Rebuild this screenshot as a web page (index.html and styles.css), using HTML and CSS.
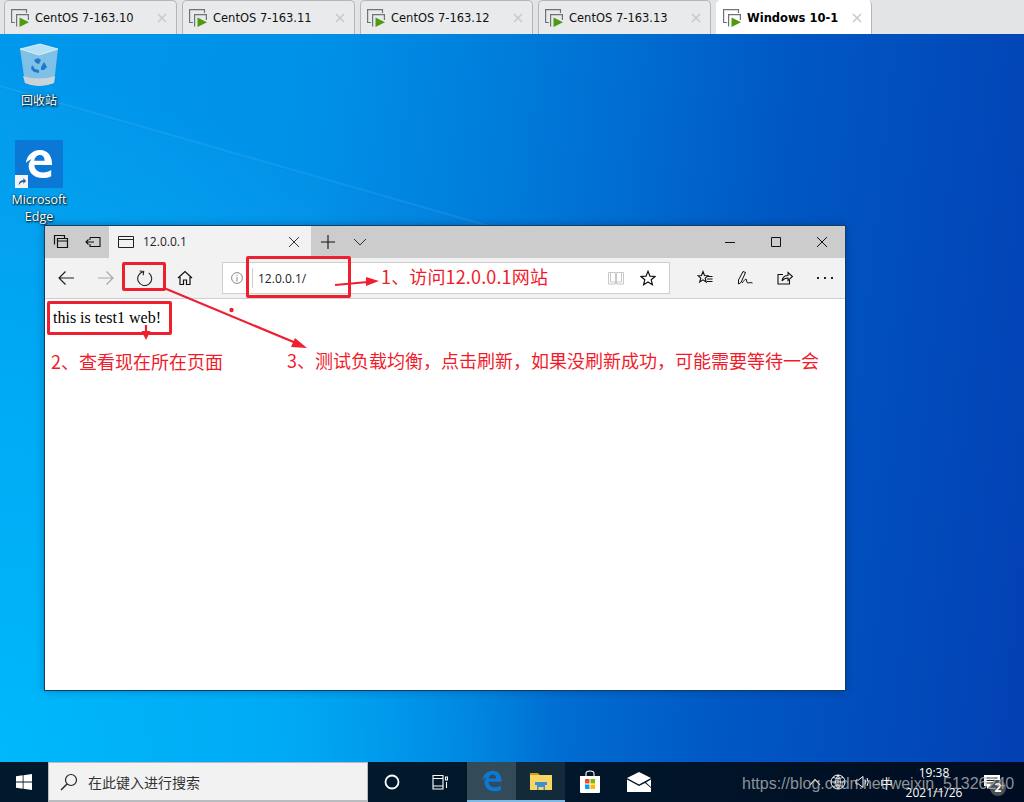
FILE: index.html
```html
<!DOCTYPE html>
<html lang="zh">
<head>
<meta charset="utf-8">
<title>Windows 10-1</title>
<link rel="stylesheet" href="styles.css">
</head>
<body>
<svg class="defs" width="0" height="0" aria-hidden="true">
  <symbol id="vm" viewBox="0 0 18 18">
    <path d="M15.500 4V.6H.6V13.500H4" fill="none" stroke="#6d7378" stroke-width="1.200"/>
    <path d="M5.600 17.500V5.600H17.400V11" fill="none" stroke="#6d7378" stroke-width="1.200"/>
    <path d="M8.500 8.500V18L18 13.200Z" fill="#4f9a10"/>
  </symbol>
  <symbol id="x" viewBox="0 0 10 10">
    <path d="M1 1L9 9M9 1L1 9" fill="none" stroke="currentColor" stroke-width="1.500"/>
  </symbol>
</svg>

<header class="tabstrip">
  <div class="tab"><svg class="tab-icon"><use href="#vm"/></svg><span class="tab-label">CentOS 7-163.10</span><svg class="tab-x"><use href="#x"/></svg></div>
  <div class="tab"><svg class="tab-icon"><use href="#vm"/></svg><span class="tab-label">CentOS 7-163.11</span><svg class="tab-x"><use href="#x"/></svg></div>
  <div class="tab"><svg class="tab-icon"><use href="#vm"/></svg><span class="tab-label">CentOS 7-163.12</span><svg class="tab-x"><use href="#x"/></svg></div>
  <div class="tab"><svg class="tab-icon"><use href="#vm"/></svg><span class="tab-label">CentOS 7-163.13</span><svg class="tab-x"><use href="#x"/></svg></div>
  <div class="tab tab-active"><svg class="tab-icon"><use href="#vm"/></svg><span class="tab-label">Windows 10-1</span><svg class="tab-x"><use href="#x"/></svg></div>
</header>

<main class="desktop">
  <svg class="ray" viewBox="0 0 1024 728" aria-hidden="true">
    <path d="M0 52L520 201" fill="none" stroke="#ffffff" stroke-opacity=".07" stroke-width="2"/>
    <path d="M0 54L520 203L0 240Z" fill="#ffffff" opacity=".012"/>
  </svg>

  <div class="desk-icon desk-bin">
    <svg class="bin-art" viewBox="0 0 40 44">
      <path d="M1 6L21 1L39 6L35 40Q20 46 6 40Z" fill="#8dc4e6" opacity=".9"/>
      <path d="M1 6L21 1L39 6L20 12Z" fill="#b7dff5" stroke="#e3f3fb" stroke-width=".8"/>
      <path d="M4 33Q20 38 36 33L35 40Q20 46 6 40Z" fill="#c9d3d9"/>
      <path d="M15 17L19 15L22 17L20 21L17 20ZM25 19L28 24L25 27L22 27V24ZM13 22L16 26L20 27V30L15 29L12 26Z" fill="#1e79c8"/>
    </svg>
    <span class="desk-label">回收站</span>
  </div>

  <div class="desk-icon desk-edge">
    <div class="edge-tile">
      <svg class="edge-art" viewBox="0 0 32 32">
        <path d="M2 15C3 6 10 1 17 1C26 1 30 8 30 17H11C11.500 22 15 25 20 25C24 25 27 24 29 22.500V29C26 30.500 23 31 20 31C11 31 5.500 26 5 19C4.800 16 6 13.500 8 11C5 12 3.500 13.500 2 15ZM11 12.500H22C22 8.500 20 6.500 17 6.500C14 6.500 11.500 9 11 12.500Z" fill="#fff"/>
      </svg>
      <span class="shortcut"><svg viewBox="0 0 12 12"><path d="M3 10C3 6 5 4.500 8 4.500V2.500L11 5.500L8 8.500V6.500C6 6.500 4.500 7.500 3 10Z" fill="#1f5f9e"/></svg></span>
    </div>
    <span class="desk-label">Microsoft<br>Edge</span>
  </div>

  <section class="window">
    <div class="win-title">
      <div class="title-tools">
        <svg class="ico16" viewBox="0 0 16 16"><path d="M1.500 10.500V1.500H11.500V4M4.500 13.500V4.500H14.500V13.500ZM4.500 7H14.500" fill="none" stroke="#111" stroke-width="1.200"/></svg>
        <svg class="ico16" viewBox="0 0 16 16"><path d="M5 3.500H15V12.500H5V10M5 6V3.500M9 8H1M3.500 5.500L1 8L3.500 10.500" fill="none" stroke="#111" stroke-width="1.100"/></svg>
      </div>
      <div class="page-tab">
        <svg class="ico16" viewBox="0 0 16 16"><path d="M.5 2.500H15.500V13.500H.5ZM.5 5.500H15.500" fill="none" stroke="#222" stroke-width="1"/></svg>
        <span class="page-title">12.0.0.1</span>
        <svg class="page-x" viewBox="0 0 12 12"><path d="M1 1L11 11M11 1L1 11" fill="none" stroke="#333" stroke-width="1"/></svg>
      </div>
      <div class="title-new">
        <svg class="ico14" viewBox="0 0 14 14"><path d="M7 0V14M0 7H14" fill="none" stroke="#111" stroke-width="1.100"/></svg>
        <svg class="ico14" viewBox="0 0 14 14"><path d="M1 4L7 10L13 4" fill="none" stroke="#333" stroke-width="1"/></svg>
      </div>
      <div class="caption">
        <span class="cap-btn"><svg class="ico10" viewBox="0 0 10 10"><path d="M0 5.500H10" stroke="#111" fill="none"/></svg></span>
        <span class="cap-btn"><svg class="ico10" viewBox="0 0 10 10"><path d="M.5.500H9.500V9.500H.5Z" stroke="#111" fill="none"/></svg></span>
        <span class="cap-btn"><svg class="ico10" viewBox="0 0 10 10"><path d="M0 0L10 10M10 0L0 10" stroke="#111" fill="none"/></svg></span>
      </div>
    </div>
    <div class="toolbar">
      <div class="nav">
        <svg class="ico18" viewBox="0 0 18 18"><path d="M17 9H2M8.500 2.500L2 9L8.500 15.500" fill="none" stroke="#222" stroke-width="1.200"/></svg>
        <svg class="ico18" viewBox="0 0 18 18"><path d="M1 9H16M9.500 2.500L16 9L9.500 15.500" fill="none" stroke="#a8a8a8" stroke-width="1.200"/></svg>
        <svg class="ico16" viewBox="0 0 16 16"><path d="M5.500 2A7 7 0 1 0 11 2.400M5.800 5.500V1.800H1.800" fill="none" stroke="#222" stroke-width="1.100" transform="rotate(8 8 8)"/></svg>
        <svg class="ico16 home" viewBox="0 0 16 16"><path d="M1 8L8 1.500L15 8M3 7V14.500H6.500V10H9.500V14.500H13V7" fill="none" stroke="#111" stroke-width="1.200"/></svg>
      </div>
      <div class="address">
        <svg class="info" viewBox="0 0 12 12"><circle cx="6" cy="6" r="5.400" fill="none" stroke="#888"/><path d="M6 5V9.500M6 2.800V4" stroke="#888" fill="none"/></svg>
        <span class="addr-sep"></span>
        <span class="addr-text">12.0.0.1/</span>
        <svg class="book" viewBox="0 0 16 14"><path d="M.5 1.500H7.500V13H.5ZM8.500 1.500H15.500V13H8.500ZM2.500 1.500V11H7.500M13.500 1.500V11H8.500" fill="none" stroke="#c8c8c8"/></svg>
        <svg class="star" viewBox="0 0 16 16"><path d="M8 1.300L10 6.200L15 6.500L11.200 9.800L12.400 14.700L8 12L3.600 14.700L4.800 9.800L1 6.500L6 6.200Z" fill="none" stroke="#111" stroke-width="1.200"/></svg>
      </div>
      <div class="actions">
        <svg class="ico16" viewBox="0 0 16 16"><path d="M6 1.500L7.500 5.500L11 5.700L8.200 8.200L9.200 12L6 9.800L2.700 12L3.800 8.200L1 5.700L4.500 5.500ZM10 6.500H15.500M10 9H15.500M10 11.500H15.500" fill="none" stroke="#111" stroke-width="1.100"/></svg>
        <svg class="ico16" viewBox="0 0 16 16"><path d="M1.500 10L6 1.500L8.500 2.500L4 12.500L1.500 14ZM5 13C7 11 8 9 9 9C10 9 9 13 11 13C12.500 13 13 12 15.500 13" fill="none" stroke="#111" stroke-width="1"/></svg>
        <svg class="ico16" viewBox="0 0 16 16"><path d="M6 4.500H1V14H12.500V10M5 11C5.500 7.500 8 5.500 11 5.500V2.500L15.500 6.500L11 10.500V8C8.500 8 6.500 9 5 11Z" fill="none" stroke="#111" stroke-width="1.100"/></svg>
        <svg class="dots" viewBox="0 0 16 2"><path d="M0 0H2V2H0ZM7 0H9V2H7ZM14 0H16V2H14Z" fill="#222"/></svg>
      </div>
    </div>
    <div class="page">this is test1 web!</div>
  </section>

  <div class="mark mark-reload"></div>
  <div class="mark mark-address"></div>
  <div class="mark mark-text"></div>
  <svg class="arrows" viewBox="0 0 1024 728" aria-hidden="true">
    <path d="M335 251L368 248" stroke="#ee2030" stroke-width="2.200" fill="none"/>
    <path d="M379 247L366 243V252Z" fill="#ee2030"/>
    <path d="M146 291V300" stroke="#ee2030" stroke-width="2.200" fill="none"/>
    <path d="M146 306L141.500 297H150.500Z" fill="#ee2030"/>
    <path d="M164 254L296 309" stroke="#ee2030" stroke-width="2.200" fill="none"/>
    <path d="M307 314L295 304L291 313Z" fill="#ee2030"/>
    <circle cx="231.500" cy="276" r="2.200" fill="#ee2030"/>
  </svg>
  <span class="note note-1">1、访问12.0.0.1网站</span>
  <span class="note note-2">2、查看现在所在页面</span>
  <span class="note note-3">3、测试负载均衡，点击刷新，如果没刷新成功，可能需要等待一会</span>
</main>

<footer class="taskbar">
  <div class="start">
    <svg class="win-logo" viewBox="0 0 16 16"><path d="M0 2.300L6.700 1.300V7.600H0ZM7.500 1.200L16 0V7.600H7.500ZM0 8.400H6.700V14.700L0 13.700ZM7.500 8.400H16V16L7.500 14.800Z" fill="#fff"/></svg>
  </div>
  <div class="search">
    <svg class="search-ico" viewBox="0 0 18 18"><circle cx="11" cy="7" r="5.500" fill="none" stroke="#222" stroke-width="1.200"/><path d="M7 11L1 17" stroke="#222" stroke-width="1.400"/></svg>
    <span class="search-text">在此键入进行搜索</span>
  </div>
  <div class="task-slot"><svg class="ico16" viewBox="0 0 16 16"><circle cx="8" cy="8" r="6.500" fill="none" stroke="#fff" stroke-width="1.800"/></svg></div>
  <div class="task-slot"><svg class="ico16" viewBox="0 0 16 16"><path d="M1 4.500V1.500H11V4.500M1 12V15H11V12M1 4.500H11V12H1ZM13.500 3V6H15.500V3ZM14.500 8V14" fill="none" stroke="#fff" stroke-width="1.100"/></svg></div>
  <div class="task-slot task-app task-on"><svg class="ico22" viewBox="0 0 32 32"><path d="M2 15C3 6 10 1 17 1C26 1 30 8 30 17H11C11.500 22 15 25 20 25C24 25 27 24 29 22.500V29C26 30.500 23 31 20 31C11 31 5.500 26 5 19C4.800 16 6 13.500 8 11C5 12 3.500 13.500 2 15ZM11 12.500H22C22 8.500 20 6.500 17 6.500C14 6.500 11.500 9 11 12.500Z" fill="#0a78d4"/></svg></div>
  <div class="task-slot task-app task-folder"><svg class="ico22" viewBox="0 0 22 18"><path d="M0 1H8L10 3H0Z" fill="#d99a12"/><path d="M0 3H22V18H0Z" fill="#f8d666"/><path d="M5 10H17V13H15V18H7V13H5Z" fill="#3d8fd4"/><path d="M8.500 15H13.500V18H8.500Z" fill="#f8d666"/></svg></div>
  <div class="task-slot task-app"><svg class="ico24" viewBox="0 0 24 24"><path d="M2 6H22V22Q22 23 21 23H3Q2 23 2 22Z" fill="#fff"/><path d="M8 6V3.500Q8 1 12 1Q16 1 16 3.500V6" fill="none" stroke="#fff" stroke-width="1.100"/><path d="M7 9H11.500V13.500H7Z" fill="#f25022"/><path d="M12.500 9H17V13.500H12.500Z" fill="#7fba00"/><path d="M7 14.500H11.500V19H7Z" fill="#00a4ef"/><path d="M12.500 14.500H17V19H12.500Z" fill="#ffb900"/></svg></div>
  <div class="task-slot task-app"><svg class="ico24" viewBox="0 0 24 20"><path d="M0 6L12 0L24 6L12 12.500Z" fill="#fff"/><path d="M0 7.500L12 14L18 11L24 16V20H0Z" fill="#fff"/><path d="M19 10.500L24 7.500V15Z" fill="#fff"/></svg></div>
  <div class="tray">
    <svg class="tray-ico tray-up" viewBox="0 0 12 8"><path d="M1 7L6 1.500L11 7" fill="none" stroke="#fff" stroke-width="1.100"/></svg>
    <svg class="tray-ico" viewBox="0 0 16 16"><circle cx="8" cy="8" r="7" fill="none" stroke="#fff"/><path d="M1 8H15M8 1V15M3 3.500Q8 6 13 3.500M3 12.500Q8 10 13 12.500M8 1Q3 8 8 15M8 1Q13 8 8 15" fill="none" stroke="#fff" stroke-width=".8"/></svg>
    <svg class="tray-ico" viewBox="0 0 16 16"><path d="M1 6H3.500L8 2.500V13.500L3.500 10H1ZM10 5.500Q11.500 8 10 10.500M12 4Q14.500 8 12 12" fill="none" stroke="#fff" stroke-width="1"/></svg>
    <span class="ime">中</span>
  </div>
  <div class="clock"><span>19:38</span><span>2021/1/26</span></div>
  <div class="notify">
    <svg class="ico16" viewBox="0 0 16 14"><path d="M0 0H16V11H6L3 14V11H0Z" fill="#fff"/><path d="M2.500 3H13.500M2.500 5.500H13.500M2.500 8H13.500" stroke="#222" stroke-width="1" fill="none"/></svg>
    <span class="badge">2</span>
  </div>
  <span class="watermark">https://blog.csdn.net/weixin_51326240</span>
</footer>
</body>
</html>
```
FILE: styles.css
```css
html, body { margin: 0; padding: 0; }
body {
  width: 1024px;
  height: 802px;
  display: flex;
  flex-direction: column;
  overflow: hidden;
  font-family: "Liberation Sans", "Noto Sans CJK SC", sans-serif;
  background: #0078d8;
}
svg { display: block; flex: none; }
.defs { position: absolute; }

.tabstrip {
  height: 34px;
  flex: none;
  display: flex;
  gap: 5px;
  padding-left: 4px;
  background: #e3e4e6;
  box-sizing: border-box;
}
.tab {
  width: 173px;
  box-sizing: border-box;
  display: flex;
  align-items: center;
  padding: 0 9px 0 6px;
  background: #e9eaec;
  border: 1px solid #b4b6b9;
  border-bottom: 0;
  border-radius: 5px 5px 0 0;
}
.tab-active {
  width: 156px;
  background: #fff;
  border-color: #fff #b4b6b9 #fff #fff;
}
.tab-icon { width: 18px; height: 18px; margin-right: 6px; }
.tab-label { flex: 1; font-family: "DejaVu Sans", sans-serif; font-size: 11.500px; color: #111; white-space: nowrap; }
.tab-active .tab-label { font-weight: 700; color: #000; }
.tab-x { width: 10px; height: 10px; color: #c9c9c9; }

.desktop {
  flex: 1;
  position: relative;
  overflow: hidden;
  background:
    radial-gradient(ellipse 560px 700px at 0% 100%, #00b8fb 0%, rgba(0,175,247,.85) 50%, rgba(0,150,235,0) 100%),
    linear-gradient(96deg, #0098ec 0%, #0090e8 30%, #0078d8 50%, #0058c4 72%, #0340b4 100%);
}
.ray { position: absolute; left: 0; top: 0; width: 1024px; height: 728px; }

.desk-icon {
  position: absolute;
  width: 74px;
  display: flex;
  flex-direction: column;
  align-items: center;
}
.desk-bin { left: 2px; top: 9px; }
.desk-edge { left: 2px; top: 106px; }
.bin-art { width: 40px; height: 44px; }
.desk-label {
  margin-top: 4px;
  font-family: "Noto Sans CJK SC", sans-serif;
  font-size: 12px;
  line-height: 17px;
  color: #fff;
  text-align: center;
  text-shadow: 1px 1px 2px #000, 0 0 2px rgba(0,0,0,.7);
}
.desk-edge .desk-label { margin-top: 3px; font-family: "Open Sans", sans-serif; font-size: 12.500px; }
.edge-tile {
  width: 48px;
  height: 48px;
  background: #0a78d4;
  position: relative;
  display: flex;
  align-items: center;
  justify-content: center;
}
.edge-art { width: 30px; height: 32px; }
.shortcut {
  position: absolute;
  left: 0;
  bottom: 0;
  width: 13px;
  height: 13px;
  background: #f3f3f3;
  display: flex;
  align-items: center;
  justify-content: center;
}
.shortcut svg { width: 11px; height: 11px; }

.window {
  position: absolute;
  left: 44px;
  top: 191px;
  width: 802px;
  height: 466px;
  box-sizing: border-box;
  border: 1px solid #0f3f66;
  display: flex;
  flex-direction: column;
  background: #fff;
  box-shadow: 0 0 8px rgba(0,20,60,.3);
}
.win-title {
  height: 32px;
  flex: none;
  display: flex;
  align-items: center;
  background: #cccccc;
}
.title-tools { width: 64px; display: flex; gap: 16px; padding-left: 8px; box-sizing: border-box; }
.page-tab {
  width: 202px;
  height: 32px;
  box-sizing: border-box;
  background: #f2f2f2;
  display: flex;
  align-items: center;
  padding: 0 11px 0 9px;
}
.page-title { flex: 1; margin-left: 9px; font-size: 12px; line-height: 16px; font-family: "Open Sans", sans-serif; color: #222; }
.page-x { width: 12px; height: 12px; }
.title-new { display: flex; gap: 18px; margin-left: 10px; }
.caption { margin-left: auto; display: flex; }
.cap-btn { width: 46px; height: 32px; display: flex; align-items: center; justify-content: center; }
.ico10 { width: 10px; height: 10px; }
.ico14 { width: 14px; height: 14px; }
.ico16 { width: 16px; height: 16px; }
.ico18 { width: 18px; height: 18px; }
.ico22 { width: 22px; height: 22px; }
.ico24 { width: 24px; height: 24px; }

.toolbar {
  height: 41px;
  flex: none;
  box-sizing: border-box;
  display: flex;
  align-items: center;
  background: #f2f2f2;
  border-bottom: 1px solid #cfcfcf;
}
.nav { width: 177px; flex: none; box-sizing: border-box; padding-left: 12px; display: flex; align-items: center; gap: 22px; }
.nav .home { margin-left: 2px; }
.address {
  width: 448px;
  flex: none;
  height: 32px;
  box-sizing: border-box;
  background: #fff;
  border: 1px solid #cfcfcf;
  display: flex;
  align-items: center;
  padding: 0 13px 0 8px;
}
.info { width: 12px; height: 12px; }
.addr-sep { width: 1px; height: 20px; background: #cfcfcf; margin: 0 5px 0 9px; }
.addr-text { flex: 1; font-size: 12px; font-family: "Open Sans", sans-serif; color: #222; }
.book { width: 16px; height: 14px; margin-right: 16px; }
.star { width: 16px; height: 16px; }
.actions { flex: 1; display: flex; align-items: center; gap: 24px; padding-left: 27px; }
.dots { width: 16px; height: 2px; }
.page {
  flex: 1;
  padding: 9px 8px 8px;
  font-family: "Liberation Serif", serif;
  font-size: 16px;
  line-height: 20px;
  color: #000;
  background: #fff;
}

.mark { position: absolute; box-sizing: border-box; border: 3px solid #ee2030; border-radius: 2px; }
.mark-reload { left: 122px; top: 228px; width: 44px; height: 29px; }
.mark-address { left: 246px; top: 222px; width: 105px; height: 42px; }
.mark-text { left: 47px; top: 267px; width: 125px; height: 34px; }
.arrows { position: absolute; left: 0; top: 0; width: 1024px; height: 728px; }
.note {
  position: absolute;
  font-family: "Noto Sans CJK SC", sans-serif;
  font-size: 18px;
  line-height: 24px;
  color: #f01c2c;
  white-space: nowrap;
}
.note-1 { left: 381px; top: 230px; letter-spacing: .15px; }
.note-2 { left: 51px; top: 315px; }
.note-3 { left: 287px; top: 314px; }

.taskbar {
  height: 40px;
  flex: none;
  position: relative;
  display: flex;
  align-items: center;
  background: linear-gradient(90deg, #02192b 0%, #02192b 40%, #01162a 60%, #000c22 100%);
  color: #fff;
}
.start { width: 48px; height: 40px; display: flex; align-items: center; justify-content: center; }
.win-logo { width: 16px; height: 16px; }
.search {
  width: 320px;
  height: 40px;
  box-sizing: border-box;
  background: #f2f2f2;
  border: 1px solid #b9bcbf;
  border-bottom-width: 2px;
  display: flex;
  align-items: center;
  padding-left: 11px;
}
.search-ico { width: 18px; height: 18px; }
.search-text { margin-left: 10px; font-family: "Noto Sans CJK SC", sans-serif; font-size: 14px; color: #333; }
.task-slot { width: 48px; height: 40px; display: flex; align-items: center; justify-content: center; box-sizing: border-box; }
.task-app { width: 49px; }
.task-on { background: #334a59; border-bottom: 2px solid #7db9e6; margin-left: 3px; }
.task-folder { background: #122a3a; border-bottom: 2px solid #7db9e6; }
.tray {
  position: absolute;
  left: 809px;
  top: 0;
  height: 40px;
  display: flex;
  align-items: center;
  gap: 9px;
}
.tray-ico { width: 16px; height: 16px; }
.tray-up { width: 12px; height: 8px; }
.ime { font-family: "Noto Sans CJK SC", sans-serif; font-size: 13px; color: #fff; }
.clock {
  position: absolute;
  left: 894px;
  top: 1px;
  width: 80px;
  display: flex;
  flex-direction: column;
  align-items: center;
  font-family: "Open Sans", sans-serif;
  font-size: 12px;
  line-height: 20px;
  color: #fff;
}
.notify { position: absolute; left: 984px; top: 12px; }
.badge {
  position: absolute;
  left: 6px;
  top: 6px;
  width: 16px;
  height: 16px;
  border-radius: 50%;
  background: #4b4f52;
  font-family: "Open Sans", sans-serif;
  font-size: 12px;
  font-weight: 700;
  line-height: 16px;
  text-align: center;
}
.watermark {
  position: absolute;
  left: 742px;
  top: 12px;
  font-size: 16px;
  line-height: 20px;
  color: rgba(190,190,190,.75);
  white-space: nowrap;
}
```
